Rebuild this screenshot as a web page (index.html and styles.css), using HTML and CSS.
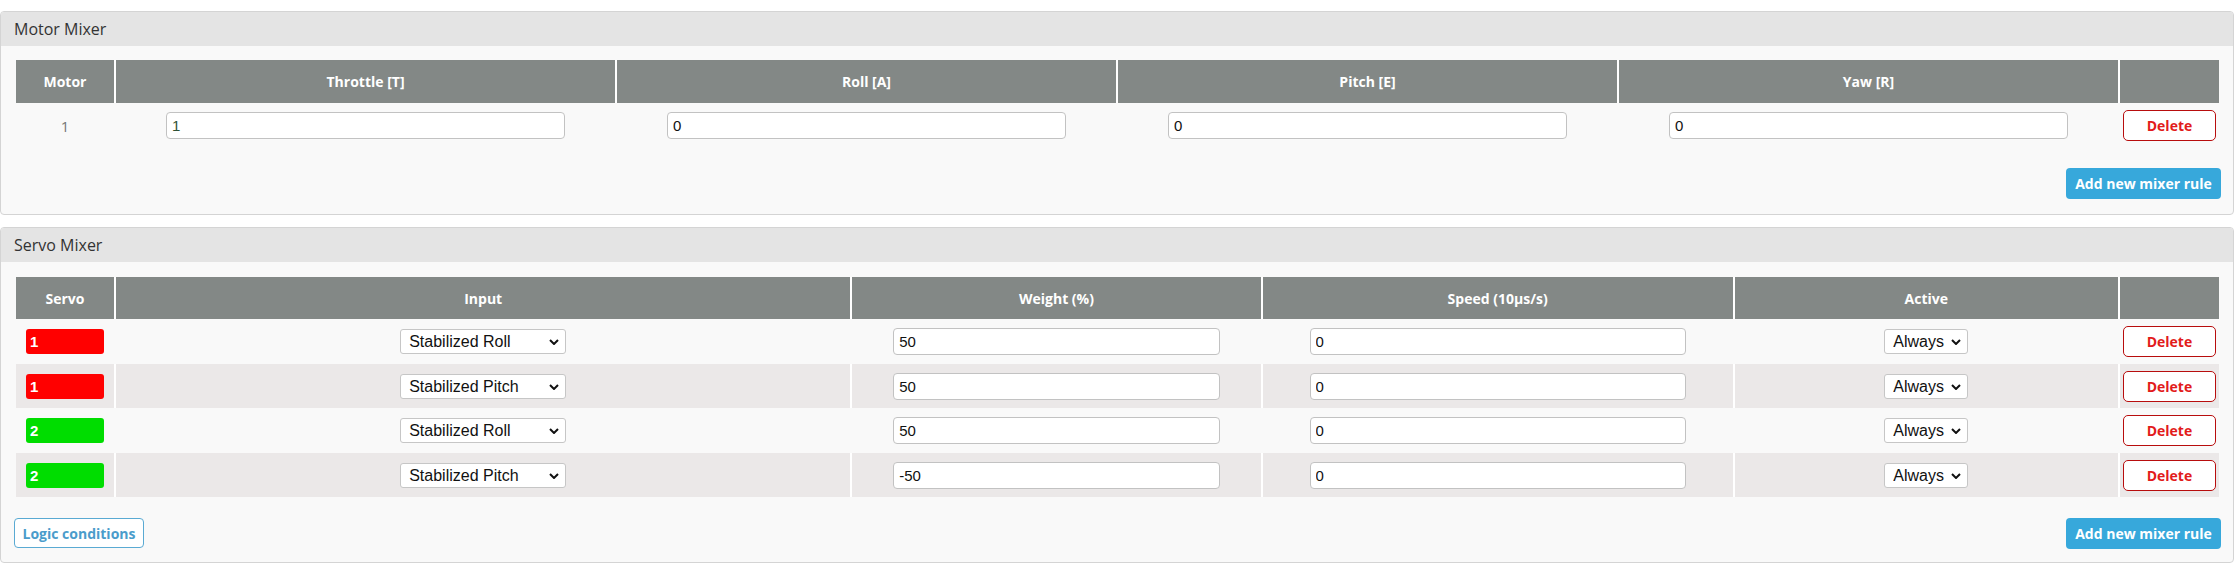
FILE: index.html
```html
<!DOCTYPE html>
<html>
<head>
<meta charset="utf-8">
<title>Mixer</title>
<link rel="stylesheet" href="styles.css">
</head>
<body>
<div class="page">
  <section class="panel panel-motor">
    <div class="panel-title">Motor Mixer</div>
    <div class="panel-body">
      <table class="mix">
        <colgroup>
          <col class="c-id"><col class="c-m"><col class="c-m"><col class="c-m"><col class="c-m"><col class="c-del">
        </colgroup>
        <thead>
          <tr><th>Motor</th><th>Throttle [T]</th><th>Roll [A]</th><th>Pitch [E]</th><th>Yaw [R]</th><th></th></tr>
        </thead>
        <tbody>
          <tr class="row-m">
            <td class="num">1</td>
            <td><input class="field field-changed" type="text" value="1"></td>
            <td><input class="field" type="text" value="0"></td>
            <td><input class="field" type="text" value="0"></td>
            <td><input class="field" type="text" value="0"></td>
            <td><button class="btn-del">Delete</button></td>
          </tr>
        </tbody>
      </table>
      <div class="panel-foot">
        <span></span>
        <button class="btn-add">Add new mixer rule</button>
      </div>
    </div>
  </section>

  <section class="panel panel-servo">
    <div class="panel-title">Servo Mixer</div>
    <div class="panel-body">
      <table class="mix">
        <colgroup>
          <col class="c-id"><col class="c-input"><col class="c-weight"><col class="c-speed"><col class="c-active"><col class="c-del">
        </colgroup>
        <thead>
          <tr><th>Servo</th><th>Input</th><th>Weight (%)</th><th>Speed (10µs/s)</th><th>Active</th><th></th></tr>
        </thead>
        <tbody>
          <tr class="row-s tall">
            <td class="left"><span class="badge badge-red">1</span></td>
            <td><span class="sel"><select class="sel-input"><option>Stabilized Roll</option></select><svg class="chev" width="10" height="6" viewBox="0 0 10 6"><polyline points="1,1 5,5 9,1"/></svg></span></td>
            <td><input class="field" type="text" value="50"></td>
            <td><input class="field" type="text" value="0"></td>
            <td><span class="sel"><select class="sel-active"><option>Always</option></select><svg class="chev" width="10" height="6" viewBox="0 0 10 6"><polyline points="1,1 5,5 9,1"/></svg></span></td>
            <td><button class="btn-del">Delete</button></td>
          </tr>
          <tr class="row-s alt">
            <td class="left"><span class="badge badge-red">1</span></td>
            <td><span class="sel"><select class="sel-input"><option>Stabilized Pitch</option></select><svg class="chev" width="10" height="6" viewBox="0 0 10 6"><polyline points="1,1 5,5 9,1"/></svg></span></td>
            <td><input class="field" type="text" value="50"></td>
            <td><input class="field" type="text" value="0"></td>
            <td><span class="sel"><select class="sel-active"><option>Always</option></select><svg class="chev" width="10" height="6" viewBox="0 0 10 6"><polyline points="1,1 5,5 9,1"/></svg></span></td>
            <td><button class="btn-del">Delete</button></td>
          </tr>
          <tr class="row-s tall">
            <td class="left"><span class="badge badge-green">2</span></td>
            <td><span class="sel"><select class="sel-input"><option>Stabilized Roll</option></select><svg class="chev" width="10" height="6" viewBox="0 0 10 6"><polyline points="1,1 5,5 9,1"/></svg></span></td>
            <td><input class="field" type="text" value="50"></td>
            <td><input class="field" type="text" value="0"></td>
            <td><span class="sel"><select class="sel-active"><option>Always</option></select><svg class="chev" width="10" height="6" viewBox="0 0 10 6"><polyline points="1,1 5,5 9,1"/></svg></span></td>
            <td><button class="btn-del">Delete</button></td>
          </tr>
          <tr class="row-s alt">
            <td class="left"><span class="badge badge-green">2</span></td>
            <td><span class="sel"><select class="sel-input"><option>Stabilized Pitch</option></select><svg class="chev" width="10" height="6" viewBox="0 0 10 6"><polyline points="1,1 5,5 9,1"/></svg></span></td>
            <td><input class="field" type="text" value="-50"></td>
            <td><input class="field" type="text" value="0"></td>
            <td><span class="sel"><select class="sel-active"><option>Always</option></select><svg class="chev" width="10" height="6" viewBox="0 0 10 6"><polyline points="1,1 5,5 9,1"/></svg></span></td>
            <td><button class="btn-del">Delete</button></td>
          </tr>
        </tbody>
      </table>
      <div class="panel-foot">
        <button class="btn-logic">Logic conditions</button>
        <button class="btn-add">Add new mixer rule</button>
      </div>
    </div>
  </section>
</div>
</body>
</html>
```

FILE: styles.css
```css
* { box-sizing: border-box; }

html, body {
  margin: 0;
  padding: 0;
  background: #ffffff;
}

body {
  font-family: "Open Sans", "Liberation Sans", sans-serif;
  color: #333333;
}

.page {
  width: 2237px;
  padding: 11px 3px 0 0;
}

.panel {
  border: 1px solid #d4d4d4;
  border-radius: 4px;
  background: #f9f9f9;
  overflow: hidden;
}

.panel-motor {
  margin-bottom: 12px;
}

.panel-title {
  height: 34px;
  line-height: 34px;
  padding-left: 13px;
  background: #e4e4e4;
  font-size: 16px;
  color: #333333;
}

.panel-body {
  padding: 14px 14px 15px 15px;
}

.panel-servo .panel-body {
  padding: 15px 14px 13px 15px;
}

.mix {
  width: 100%;
  table-layout: fixed;
  border-collapse: separate;
  border-spacing: 0;
}

.c-id { width: 98px; }
.c-del { width: 101px; }
.c-input { width: 736px; }
.c-weight { width: 410px; }
.c-speed { width: 472px; }
.c-active { width: 385px; }

.mix th {
  height: 43px;
  padding: 0;
  background: #838886;
  color: #ffffff;
  font-size: 14px;
  font-weight: 700;
  text-align: center;
  vertical-align: middle;
}

.panel-servo .mix th {
  height: 42px;
}

.mix th + th {
  border-left: 2px solid #ffffff;
}

.mix td + td {
  border-left: 2px solid #f9f9f9;
}

.mix td {
  padding: 0;
  text-align: center;
  vertical-align: middle;
  background: #f9f9f9;
}

.row-m td {
  height: 45px;
}

.row-s td {
  height: 44px;
}

.row-s.tall td {
  height: 45px;
}

.row-s.alt td {
  background: #ebe8e8;
}

.row-s.alt td + td {
  border-left-color: #ffffff;
}

.mix td.left {
  text-align: left;
  padding-left: 10px;
}

.num {
  font-size: 15px;
  color: #777777;
}

.field {
  display: block;
  width: 80%;
  height: 27px;
  margin: 0 auto;
  padding: 0 5px;
  border: 1px solid #c2c2c2;
  border-radius: 4px;
  background: #ffffff;
  font-family: "Liberation Sans", Arial, sans-serif;
  font-size: 15px;
  color: #111111;
  outline: none;
}

.field-changed {
  color: #2f5236;
}

.sel {
  position: relative;
  display: inline-block;
  vertical-align: middle;
}

.sel select {
  appearance: none;
  -webkit-appearance: none;
  display: block;
  height: 25px;
  margin: 0;
  padding: 0 0 0 8px;
  border: 1px solid #c6c6c6;
  border-radius: 3px;
  background: #ffffff;
  font-family: "Liberation Sans", Arial, sans-serif;
  font-size: 16px;
  color: #111111;
  outline: none;
}

.sel-input { width: 166px; }
.sel-active { width: 84px; }

.chev {
  position: absolute;
  right: 7px;
  top: 10px;
  pointer-events: none;
}

.chev polyline {
  fill: none;
  stroke: #111111;
  stroke-width: 2;
}

.badge {
  display: block;
  width: 78px;
  height: 25px;
  line-height: 25px;
  padding-left: 4px;
  border-radius: 3px;
  font-family: "Liberation Sans", Arial, sans-serif;
  font-size: 15px;
  font-weight: 700;
  color: #ffffff;
}

.badge-red { background: #ff0000; }
.badge-green { background: #00dd00; }

.btn-del {
  display: block;
  width: 93px;
  height: 31px;
  margin: 0 auto;
  padding: 0;
  border: 1px solid #b80d0d;
  border-radius: 5px;
  background: #ffffff;
  font-family: "Open Sans", "Liberation Sans", sans-serif;
  font-size: 14px;
  font-weight: 700;
  color: #e21b1b;
}

.panel-foot {
  display: flex;
  justify-content: space-between;
  align-items: flex-start;
  margin: 20px -2px 0 -2px;
}

.panel-servo .panel-foot {
  margin-top: 21px;
}

.btn-add {
  height: 31px;
  padding: 0 8px;
  border: none;
  border-radius: 4px;
  background: #37a8db;
  font-family: "Open Sans", "Liberation Sans", sans-serif;
  font-size: 14px;
  font-weight: 700;
  color: #ffffff;
  width: 155px;
}

.btn-logic {
  height: 30px;
  width: 130px;
  padding: 0;
  border: 1px solid #5aaad3;
  border-radius: 4px;
  background: #ffffff;
  font-family: "Open Sans", "Liberation Sans", sans-serif;
  font-size: 14px;
  font-weight: 700;
  color: #4a9ccb;
}
```
